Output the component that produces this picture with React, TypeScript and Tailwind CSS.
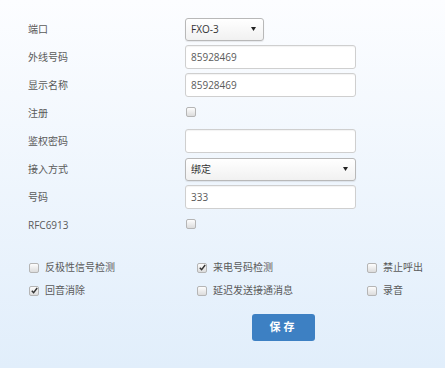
import React from "react";

const font = { fontFamily: '"Open Sans", "Noto Sans CJK SC", sans-serif' };

function Box({ checked }: { checked?: boolean }) {
  return (
    <span className="relative inline-flex h-[10px] w-[10px] shrink-0 items-center justify-center rounded-[2px] border border-[#b5b5b5] bg-gradient-to-b from-[#fdfdfd] to-[#dcdcdc]">
      {checked && (
        <svg viewBox="0 0 10 10" className="absolute h-[9px] w-[9px]">
          <path d="M2 5.2 L4 7.4 L8 2.2" fill="none" stroke="#333" strokeWidth="1.6" />
        </svg>
      )}
    </span>
  );
}

function Row({ label, children }: { label: string; children: React.ReactNode }) {
  return (
    <div className="flex h-[28px] items-center">
      <div className="w-[157px] shrink-0">{label}</div>
      {children}
    </div>
  );
}

function Input({ value }: { value?: string }) {
  return (
    <div className="flex h-[24px] w-[171px] items-center rounded-[3px] border border-[#cfcfcf] bg-white px-[5px] shadow-[inset_0_1px_1px_rgba(0,0,0,0.05)]">
      {value}
    </div>
  );
}

function Select({ value, width }: { value: string; width: string }) {
  return (
    <div
      className={`flex h-[23px] ${width} items-center justify-between rounded-[3px] border border-[#b8b8b8] bg-gradient-to-b from-white to-[#f1f1f1] pl-[5px] pr-[7px] shadow-[0_1px_1px_rgba(0,0,0,0.08)]`}
    >
      <span className="text-[#333]">{value}</span>
      <svg viewBox="0 0 5 4" className="h-[4px] w-[5px]">
        <path d="M0 0 H5 L2.5 4 Z" fill="#222" />
      </svg>
    </div>
  );
}

function Check({ label, checked }: { label: string; checked?: boolean }) {
  return (
    <div className="flex items-center gap-[6px]">
      <Box checked={checked} />
      <span>{label}</span>
    </div>
  );
}

export default function App() {
  return (
    <div
      style={font}
      className="h-[368px] w-[445px] bg-gradient-to-b from-[#fcfdff] to-[#e1eefb] pl-[28px] pt-[15px] text-[10px] text-[#5a5a5a]"
    >
      <Row label="端口">
        <Select value="FXO-3" width="w-[79px]" />
      </Row>
      <Row label="外线号码">
        <Input value="85928469" />
      </Row>
      <Row label="显示名称">
        <Input value="85928469" />
      </Row>
      <Row label="注册">
        <div className="pl-[1px]">
          <Box />
        </div>
      </Row>
      <Row label="鉴权密码">
        <Input />
      </Row>
      <Row label="接入方式">
        <Select value="绑定" width="w-[171px]" />
      </Row>
      <Row label="号码">
        <Input value="333" />
      </Row>
      <Row label="RFC6913">
        <div className="pl-[1px]">
          <Box />
        </div>
      </Row>

      <div className="mt-[21px] grid grid-cols-[168px_170px_1fr] gap-y-[8px] pl-[1px]">
        <Check label="反极性信号检测" />
        <Check label="来电号码检测" checked />
        <Check label="禁止呼出" />
        <Check label="回音消除" checked />
        <Check label="延迟发送接通消息" />
        <Check label="录音" />
      </div>

      <div className="mt-[16px] pl-[224px]">
        <div className="flex h-[27px] w-[63px] items-center justify-center rounded-[3px] bg-[#3d80c3] text-[11px] font-bold tracking-[3px] text-white">
          保存
        </div>
      </div>
    </div>
  );
}
